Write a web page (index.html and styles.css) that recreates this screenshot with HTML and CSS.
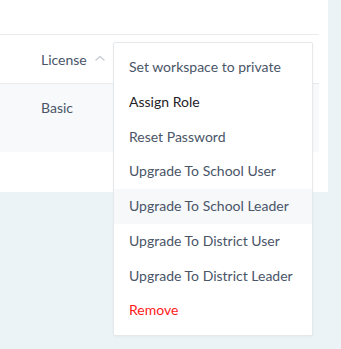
FILE: index.html
```html
<!DOCTYPE html>
<html>
<head>
<meta charset="utf-8">
<link rel="stylesheet" href="styles.css">
</head>
<body>
<div class="page">
  <div class="card">
    <div class="table">
      <div class="top"></div>
      <div class="head">
        <span class="col">License</span>
        <svg class="sort" width="10" height="6" viewBox="0 0 10 6"><path d="M1 5 L5 1.5 L9 5" fill="none" stroke="#c9ced5" stroke-width="1.4" stroke-linecap="round" stroke-linejoin="round"/></svg>
      </div>
      <div class="row">
        <span class="col">Basic</span>
      </div>
    </div>
  </div>
  <div class="menu">
    <div class="item">Set workspace to private</div>
    <div class="item dark">Assign Role</div>
    <div class="item">Reset Password</div>
    <div class="item">Upgrade To School User</div>
    <div class="item hover">Upgrade To School Leader</div>
    <div class="item">Upgrade To District User</div>
    <div class="item">Upgrade To District Leader</div>
    <div class="item danger">Remove</div>
  </div>
</div>
</body>
</html>
```
FILE: styles.css
```css
html, body {
  margin: 0;
  padding: 0;
}
body {
  background: #ebf3f6;
  font-family: Lato, "Open Sans", sans-serif;
  font-size: 14px;
  color: #4a5568;
  width: 341px;
  height: 349px;
  overflow: hidden;
}
.page {
  position: relative;
  height: 349px;
}
.card {
  width: 328px;
  height: 192px;
  background: #fff;
}
.table {
  width: 319px;
}
.top {
  height: 34px;
  border-bottom: 1px solid #e9ecef;
}
.head {
  height: 48px;
  display: flex;
  align-items: center;
  padding-left: 41px;
  border-bottom: 1px solid #e9ecef;
}
.sort {
  margin-left: 8px;
  margin-top: -2px;
}
.row {
  height: 68px;
  background: #f7f9fa;
  padding-left: 41px;
  box-sizing: border-box;
  padding-top: 14px;
  line-height: 20px;
}
.col {
  color: #4a5568;
}
.menu {
  position: absolute;
  left: 113px;
  top: 42px;
  width: 200px;
  height: 294px;
  box-sizing: border-box;
  background: #fff;
  border: 1px solid #e6e9ec;
  border-radius: 2px;
  box-shadow: 0 1px 3px rgba(0,0,0,0.04);
  padding-top: 7px;
}
.item {
  height: 34.75px;
  line-height: 34.75px;
  padding-left: 15px;
  color: #4a5568;
  white-space: nowrap;
}
.item.dark {
  color: #1f2328;
}
.item.hover {
  background: #f6f8fa;
}
.item.danger {
  color: #ff1a1a;
}
```
